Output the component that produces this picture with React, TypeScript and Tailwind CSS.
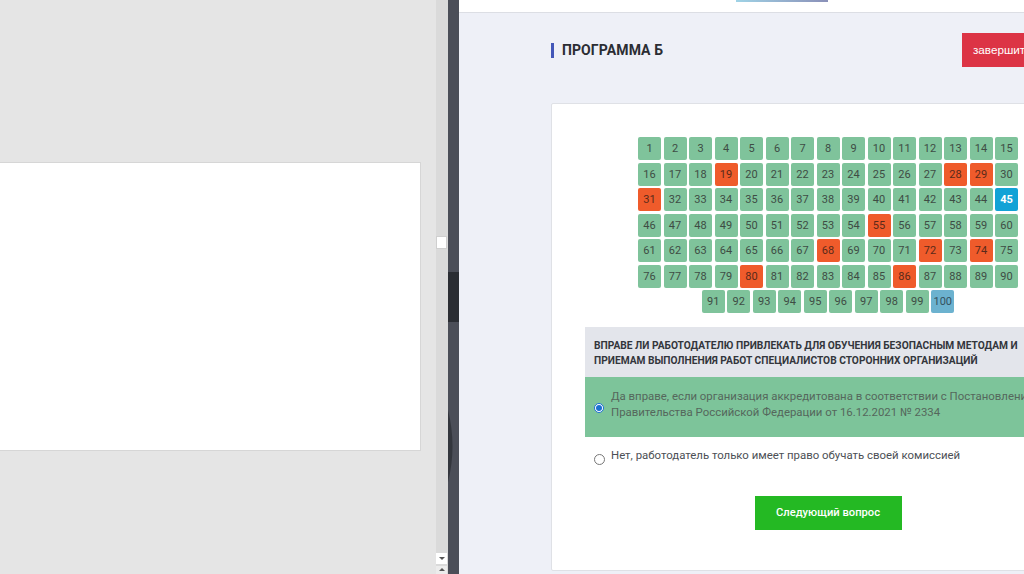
import React from 'react';

const wrong = [19, 28, 29, 31, 55, 68, 72, 74, 80, 86];
const rows: number[][] = [];
for (let r = 0; r < 6; r++) rows.push(Array.from({ length: 15 }, (_, i) => r * 15 + i + 1));
rows.push(Array.from({ length: 10 }, (_, i) => 91 + i));

function Cell({ n }: { n: number }) {
  let cls = 'bg-[#7fc39b] text-[#3e4c44]';
  if (wrong.includes(n)) cls = 'bg-[#ef5b2b] text-[#5a2a1a]';
  if (n === 45) cls = 'bg-[#12a2d6] text-white font-bold';
  if (n === 100) cls = 'bg-[#6cb2cf] text-[#34515e]';
  return (
    <div className={`w-[23px] h-[23px] rounded-[2px] flex items-center justify-center text-[11px] leading-none ${cls}`}>
      {n}
    </div>
  );
}

export default function App() {
  return (
    <div className="w-[1024px] h-[574px] overflow-hidden flex" style={{ fontFamily: 'Roboto, "Liberation Sans", sans-serif' }}>
      {/* left document area */}
      <div className="w-[436px] shrink-0 bg-[#e5e5e5] pt-[162px]">
        <div className="w-[421px] h-[289px] bg-white border-t border-r border-b border-[#d6d6d6]" />
      </div>
      <div className="w-[12px] shrink-0 bg-[#dadada] flex flex-col">
        <div className="mt-[236px] h-[13px] w-[11px] bg-white border border-[#cfcfcf]" />
        <div className="flex-1" />
        <div className="h-[11px] w-[11px] bg-white flex items-center justify-center mb-[2px]">
          <div className="w-0 h-0 border-l-[3px] border-r-[3px] border-t-[3px] border-l-transparent border-r-transparent border-t-[#555]" />
        </div>
        <div className="h-[8px] w-[11px] bg-[#ececec] flex items-start justify-center pt-[2px]">
          <div className="w-0 h-0 border-l-[3px] border-r-[3px] border-b-[3px] border-l-transparent border-r-transparent border-b-[#555]" />
        </div>
      </div>
      <div className="w-[11px] shrink-0 bg-[#4b4e58] flex flex-col relative">
        <div className="mt-[272px] h-[50px] bg-[#2a2d33]" />
        <svg className="absolute left-0 top-[410px]" width="11" height="72" viewBox="0 0 11 72">
          <path d="M0 0 Q9 36 0 72 Z" fill="#33363d" />
        </svg>
      </div>

      {/* right app area */}
      <div className="flex-1 bg-[#eef0f7] flex flex-col min-w-0">
        <div className="h-[13px] bg-white border-b border-[#dcdee4] shrink-0 relative">
          <div className="absolute left-[277px] top-0 w-[92px] h-[2px] bg-gradient-to-r from-[#9fd3e6] to-[#8a90b8]" />
        </div>
        <div className="flex items-center justify-between pl-[92px] mt-[20px] h-[34px] shrink-0">
          <div className="flex items-center gap-[8px]">
            <div className="w-[3px] h-[15px] bg-[#4357b8]" />
            <span className="text-[14px] font-bold text-[#2b2d33] tracking-[0.1px]">ПРОГРАММА Б</span>
          </div>
          <div className="h-[34px] w-[62px] overflow-hidden shrink-0">
            <div className="h-[34px] w-[120px] bg-[#dc3445] text-white text-[11.7px] flex items-center pl-[11px] whitespace-nowrap" style={{ fontFamily: '"Liberation Sans", Arial, sans-serif' }}>
              завершить тест
            </div>
          </div>
        </div>

        <div className="ml-[92px] mt-[36px] w-[554px] h-[468px] shrink-0 bg-white border border-[#dfe1e6] rounded-[2px] pt-[33px] flex flex-col items-center">
          <div className="flex flex-col gap-[2.5px] w-[380px]">
            {rows.map((row, i) => (
              <div key={i} className="flex gap-[2.5px] justify-center">
                {row.map(n => <Cell key={n} n={n} />)}
              </div>
            ))}
          </div>

          <div className="self-stretch mx-[33px] mt-[14px]">
            <div className="bg-[#e3e5eb] px-[9px] pt-[12px] pb-[9px] text-[10.2px] font-bold text-[#33363c] leading-[14.5px] uppercase whitespace-nowrap">
              Вправе ли работодателю привлекать для обучения безопасным методам и<br />
              приемам выполнения работ специалистов сторонних организаций
            </div>
            <div className="bg-[#7dc49a] flex items-center h-[60px] pl-[9px]">
              <div className="w-[10px] h-[10px] rounded-full border border-[#1a6fd1] bg-white flex items-center justify-center shrink-0 mt-[1px]">
                <div className="w-[6px] h-[6px] rounded-full bg-[#1a6fd1]" />
              </div>
              <div className="ml-[7px] text-[11.4px] leading-[16px] text-[#55675c] mt-[-6px] whitespace-nowrap">
                Да вправе, если организация аккредитована в соответствии с Постановлением<br />
                Правительства Российской Федерации от 16.12.2021 № 2334
              </div>
            </div>
            <div className="flex items-start pl-[9px] pt-[10px]">
              <div className="w-[11px] h-[11px] rounded-full border border-[#777] bg-white shrink-0 mt-[7px]" />
              <div className="ml-[6px] text-[11.4px] leading-[16px] text-[#4c4f55] whitespace-nowrap">
                Нет, работодатель только имеет право обучать своей комиссией
              </div>
            </div>
          </div>

          <button className="mt-[31px] w-[147px] h-[34px] bg-[#24b923] text-white text-[11.2px] font-medium">
            Следующий вопрос
          </button>
        </div>
      </div>
    </div>
  );
}
